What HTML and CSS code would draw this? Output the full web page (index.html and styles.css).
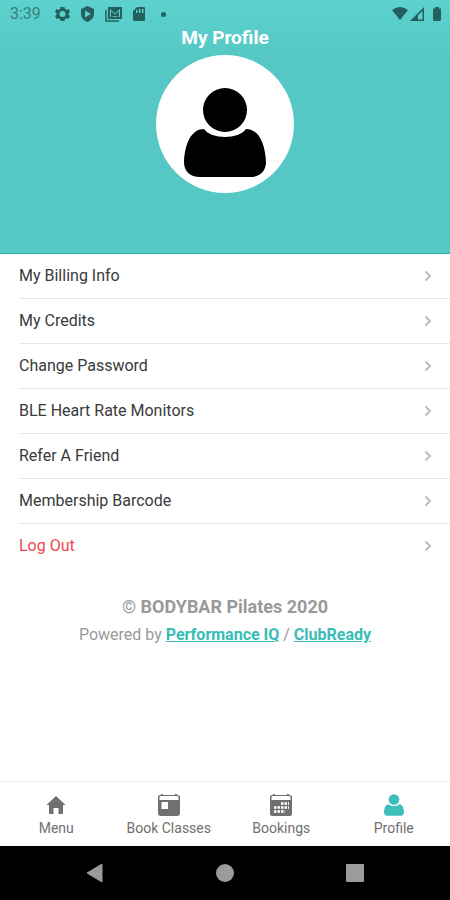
FILE: index.html
```html
<!DOCTYPE html>
<html lang="en">
<head>
<meta charset="utf-8">
<meta name="viewport" content="width=device-width, initial-scale=1">
<title>My Profile</title>
<link rel="stylesheet" href="styles.css">
</head>
<body>
<svg class="symbols" aria-hidden="true">
  <symbol id="person" viewBox="0 0 82 89">
    <circle cx="41" cy="22" r="22"/>
    <path d="M20 41C27 51.500 55 51.500 62 41C74 41 81 54 82 74C82 83 76 89 66 89H16C6 89 0 83 0 74C1 54 8 41 20 41Z"/>
  </symbol>
  <symbol id="chevron" viewBox="0 0 8 12">
    <path d="M1.500 1.500L6 6L1.500 10.500" fill="none" stroke="currentColor" stroke-width="2"/>
  </symbol>
</svg>
<header class="header">
  <div class="status">
    <span class="time">3:39</span>
    <svg class="status-left" width="106" height="16" viewBox="0 0 106 16" aria-hidden="true">
      <path fill-rule="evenodd" d="M5.500 1H9.500L10 3L11.500 3.800L13.500 3L15 6L13.400 7.500V8.500L15 10L13.500 13L11.500 12.200L10 13L9.500 15H5.500L5 13L3.500 12.200L1.500 13L0 10L1.600 8.500V7.500L0 6L1.500 3L3.500 3.800L5 3ZM7.500 5A3 3 0 1 0 7.500 11A3 3 0 1 0 7.500 5Z"/>
      <path fill-rule="evenodd" d="M32.500 0L39 3V8C39 12 36 14.500 32.500 16C29 14.500 26 12 26 8V3ZM30 4.500V11.500L36 8Z"/>
      <path fill-rule="evenodd" d="M53 1H67V13H53ZM55 3V11H65V3L60 7.500Z"/>
      <path d="M56 11V5L60 8.500L64 5V11L60 10Z"/>
      <path d="M51 4V15H64" fill="none" stroke="currentColor" stroke-width="1.500"/>
      <path fill-rule="evenodd" d="M82 1H89Q90 1 90 2V14Q90 15 89 15H79Q78 15 78 14V5ZM81 4V7H82.500V4ZM84 3V7H85.500V3ZM87 3V7H88.500V3Z"/>
    </svg>
    <span class="dot"></span>
    <svg class="status-right" width="50" height="16" viewBox="0 0 50 16" aria-hidden="true">
      <path d="M0 4Q8 -2 16 4L8 14Z"/>
      <path fill-rule="evenodd" d="M32 1V15H18ZM30.500 5L26 9.500V13.500H30.500Z"/>
      <path d="M43 1H47V2.500H49V13.500Q49 15 47.500 15H42.500Q41 15 41 13.500V2.500H43Z"/>
    </svg>
  </div>
  <h1 class="title">My Profile</h1>
  <div class="avatar"><svg width="82" height="89" role="img" aria-label="Profile picture"><use href="#person"/></svg></div>
</header>
<main class="main">
  <nav class="list" aria-label="Account">
    <a class="row" href="#">My Billing Info<svg class="chevron"><use href="#chevron"/></svg></a>
    <a class="row" href="#">My Credits<svg class="chevron"><use href="#chevron"/></svg></a>
    <a class="row" href="#">Change Password<svg class="chevron"><use href="#chevron"/></svg></a>
    <a class="row" href="#">BLE Heart Rate Monitors<svg class="chevron"><use href="#chevron"/></svg></a>
    <a class="row" href="#">Refer A Friend<svg class="chevron"><use href="#chevron"/></svg></a>
    <a class="row" href="#">Membership Barcode<svg class="chevron"><use href="#chevron"/></svg></a>
    <a class="row logout" href="#">Log Out<svg class="chevron"><use href="#chevron"/></svg></a>
  </nav>
  <footer class="credits">
    <p class="copyright">© BODYBAR Pilates 2020</p>
    <p class="powered">Powered by <a href="#">Performance IQ</a> / <a href="#">ClubReady</a></p>
  </footer>
</main>
<nav class="tabs" aria-label="Main">
  <a class="tab" href="#">
    <svg width="24" height="24" viewBox="0 0 24 24"><path d="M12 3L21.500 12H19V21H14.500V15H9.500V21H5V12H2.500Z"/></svg>Menu</a>
  <a class="tab" href="#">
    <svg width="24" height="24" viewBox="0 0 24 24"><path fill-rule="evenodd" d="M4 1H6V2H18V1H20V2Q23 2 23 4V20Q23 23 20 23H4Q1 23 1 20V4Q1 2 4 2ZM2.500 4V7H21.500V4Q21 3 20 3H4Q3 3 2.500 4ZM4.500 9V16H11V9Z"/></svg>Book Classes</a>
  <a class="tab" href="#">
    <svg width="24" height="24" viewBox="0 0 24 24"><path fill-rule="evenodd" d="M4 1H6V2H18V1H20V2Q23 2 23 4V21Q23 23 21 23H3Q1 23 1 21V4Q1 2 4 2ZM2.500 4V7H21.500V4Q21 3 20 3H4Q3 3 2.500 4Z"/><path d="M12 10.500H20M5 14.500H20M5 18.500H16" fill="none" stroke="#fff" stroke-width="2.500" stroke-dasharray="2.500 1"/></svg>Bookings</a>
  <a class="tab active" href="#" aria-current="page">
    <svg width="24" height="24" viewBox="0 0 24 24"><use href="#person" x="2" y="1" width="20" height="22"/></svg>Profile</a>
</nav>
<div class="system">
  <button aria-label="Back"><svg width="20" height="20" viewBox="0 0 20 20"><path d="M17 1V19L2 10Z" stroke="currentColor" stroke-linejoin="round"/></svg></button>
  <button aria-label="Home"><svg width="20" height="20" viewBox="0 0 20 20"><circle cx="10" cy="10" r="9"/></svg></button>
  <button aria-label="Recent apps"><svg width="20" height="20" viewBox="0 0 20 20"><rect x="1" y="1" width="18" height="18" rx="1"/></svg></button>
</div>
</body>
</html>
```
FILE: styles.css
```css
* { box-sizing: border-box; }
body {
  margin: 0;
  min-height: 100vh;
  display: flex;
  flex-direction: column;
  background: #fff;
  color: #3a3a3a;
  font: 16px/20px Roboto, sans-serif;
}
h1, p { margin: 0; }
a { color: inherit; text-decoration: none; }
svg { fill: currentColor; flex: none; }
.symbols { display: none; }
.header {
  display: flex;
  flex-direction: column;
  align-items: center;
  padding-bottom: 60px;
  background: linear-gradient(#5cd1cd, #55c8c6 60px);
  border-bottom: 1px solid #28b5b5;
}
.status {
  align-self: stretch;
  display: flex;
  align-items: center;
  height: 28px;
  padding: 0 8px 0 10px;
  color: #24605e;
}
.time { color: #397f7d; }
.status-left { margin-left: 14px; }
.dot { width: 5px; height: 5px; border-radius: 50%; background: currentColor; }
.status-right { margin-left: auto; }
.title {
  color: #fff;
  font-size: 19px;
  line-height: 20px;
  font-weight: 700;
  margin-bottom: 7px;
}
.avatar {
  width: 138px;
  height: 138px;
  border-radius: 50%;
  background: #fff;
  color: #000;
  display: flex;
  align-items: flex-end;
  justify-content: center;
  padding-bottom: 16px;
}
.main { flex: 1; }
.row {
  display: flex;
  align-items: center;
  justify-content: space-between;
  height: 45px;
  margin-left: 19px;
  padding-right: 18px;
  border-bottom: 1px solid #e6e6e6;
}
.row:last-child { border-bottom-color: transparent; }
.logout { color: #ee4850; }
.chevron { width: 8px; height: 12px; color: #bdbdbd; }
.credits { padding: 28px 16px; text-align: center; color: #999; }
.copyright { font-size: 18px; font-weight: 700; margin-bottom: 8px; }
.powered a { color: #35bdb6; font-weight: 700; text-decoration: underline; }
.tabs {
  display: grid;
  grid-template-columns: repeat(4, 1fr);
  border-top: 1px solid #eee;
}
.tab {
  display: flex;
  flex-direction: column;
  align-items: center;
  gap: 3px;
  padding: 11px 0 10px;
  color: #707070;
  font-size: 14px;
  line-height: 16px;
}
.active svg { color: #40bebc; }
.system {
  display: grid;
  grid-template-columns: repeat(3, 1fr);
  align-items: center;
  height: 54px;
  padding: 0 30px;
  background: #000;
}
.system button {
  display: flex;
  justify-content: center;
  padding: 0;
  border: 0;
  background: none;
  color: #9b9b9b;
}
```
